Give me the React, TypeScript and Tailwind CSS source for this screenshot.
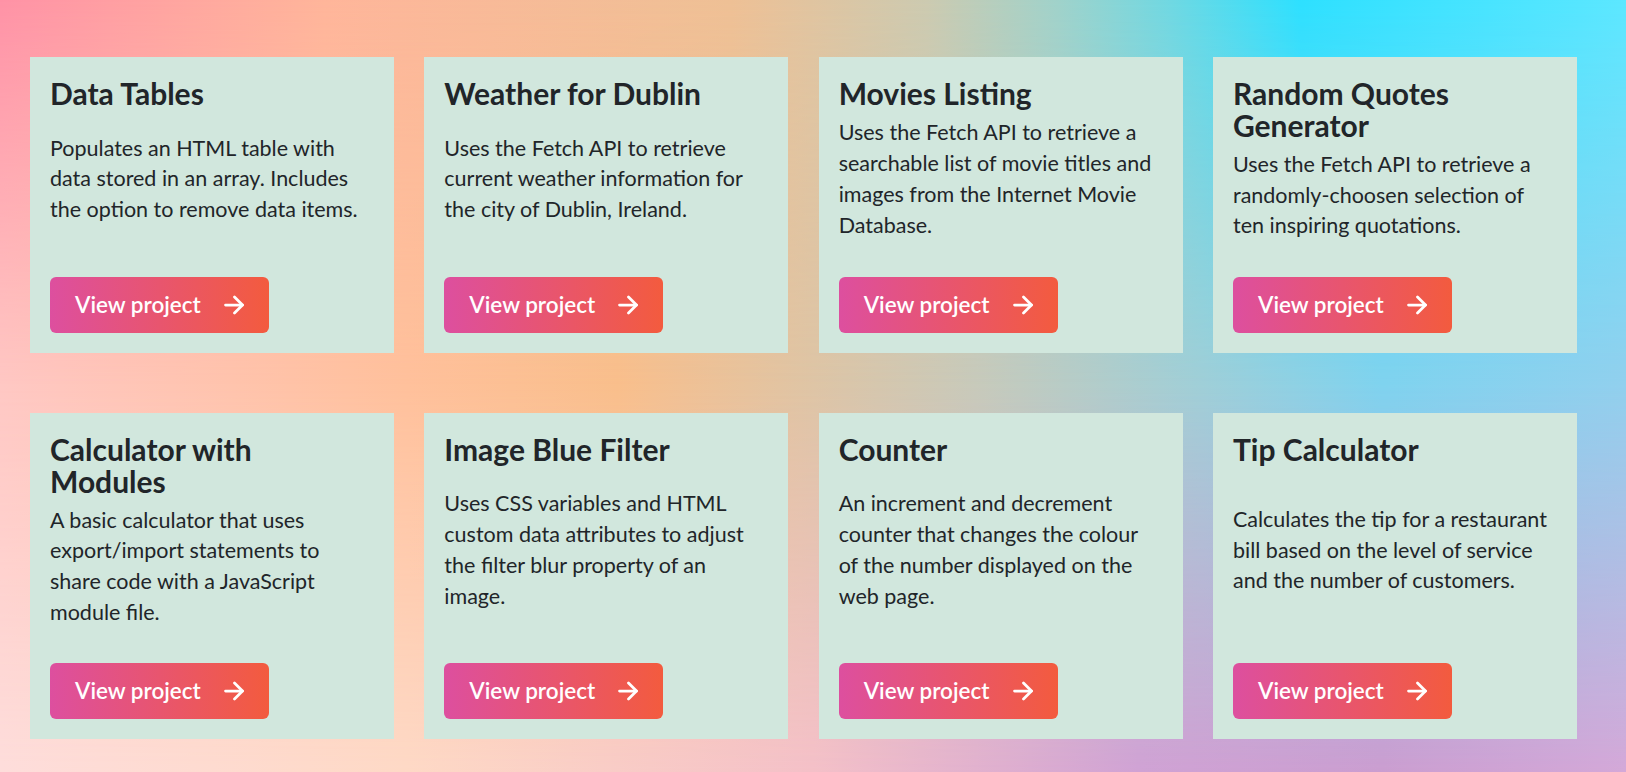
import React from 'react'

type Project = {
  title: string
  text: string
}

// line breaks follow the original layout
const projects: Project[] = [
  {
    title: 'Data Tables',
    text: 'Populates an HTML table with\ndata stored in an array. Includes\nthe option to remove data items.',
  },
  {
    title: 'Weather for Dublin',
    text: 'Uses the Fetch API to retrieve\ncurrent weather information for\nthe city of Dublin, Ireland.',
  },
  {
    title: 'Movies Listing',
    text: 'Uses the Fetch API to retrieve a\nsearchable list of movie titles and\nimages from the Internet Movie\nDatabase.',
  },
  {
    title: 'Random Quotes\nGenerator',
    text: 'Uses the Fetch API to retrieve a\nrandomly-choosen selection of\nten inspiring quotations.',
  },
  {
    title: 'Calculator with\nModules',
    text: 'A basic calculator that uses\nexport/import statements to\nshare code with a JavaScript\nmodule file.',
  },
  {
    title: 'Image Blue Filter',
    text: 'Uses CSS variables and HTML\ncustom data attributes to adjust\nthe filter blur property of an\nimage.',
  },
  {
    title: 'Counter',
    text: 'An increment and decrement\ncounter that changes the colour\nof the number displayed on the\nweb page.',
  },
  {
    title: 'Tip Calculator',
    text: 'Calculates the tip for a restaurant\nbill based on the level of service\nand the number of customers.',
  },
]

function Arrow() {
  return (
    <svg width="20" height="20" viewBox="0 0 20 20" fill="none" stroke="currentColor" strokeWidth="2.75" strokeLinecap="round" strokeLinejoin="round">
      <path d="M1.5 10h17" />
      <path d="M10.5 2l8 8-8 8" />
    </svg>
  )
}

function ProjectCard({ project }: { project: Project }) {
  return (
    <div className="flex flex-col justify-between bg-[#d1e7dd] p-5 text-[#212529]">
      <h2 className="mb-[7px] whitespace-pre-line text-[30px] font-bold leading-[32.4px]">{project.title}</h2>
      <p className="mb-[35.5px] whitespace-pre-line text-[21.5px] leading-[30.8px]">{project.text}</p>
      <a
        href="#"
        className="flex h-14 w-[219px] items-center justify-between rounded-md bg-[linear-gradient(to_right,#dd4f9f,#f35b3e)] px-[25px] text-[22.5px] font-semibold text-white"
      >
        View project
        <Arrow />
      </a>
    </div>
  )
}

export default function App() {
  return (
    <div
      className="relative min-h-screen bg-[linear-gradient(to_right,#ffc8c4_0%,#ffc19c_25%,#f9bf8c_38%,#c8cabb_60%,#80d3ef_85%,#92d0ee_100%)] font-['Lato','Liberation_Sans',sans-serif] before:absolute before:inset-0 before:bg-[linear-gradient(to_right,#ff92a6_0%,#ffb59a_20%,#eec095_45%,#cccab0_57%,#a0d2ca_65%,#6fd8e2_72%,#2de0ff_80%,#5ce7ff_100%)] before:[mask-image:linear-gradient(to_bottom,black,transparent_50%)] after:absolute after:inset-0 after:bg-[linear-gradient(to_right,#fedddb_0%,#fed9c6_25%,#f4c0c8_50%,#d0a2d4_70%,#cb9dd0_85%,#d4a8d8_100%)] after:[mask-image:linear-gradient(to_bottom,transparent_50%,black)]"
    >
      <main className="relative z-10 grid grid-cols-[repeat(4,364px)] gap-x-[30.33px] gap-y-[60px] pl-[30px] pt-[57px]">
        {projects.map((p) => (
          <ProjectCard key={p.title} project={p} />
        ))}
      </main>
    </div>
  )
}
